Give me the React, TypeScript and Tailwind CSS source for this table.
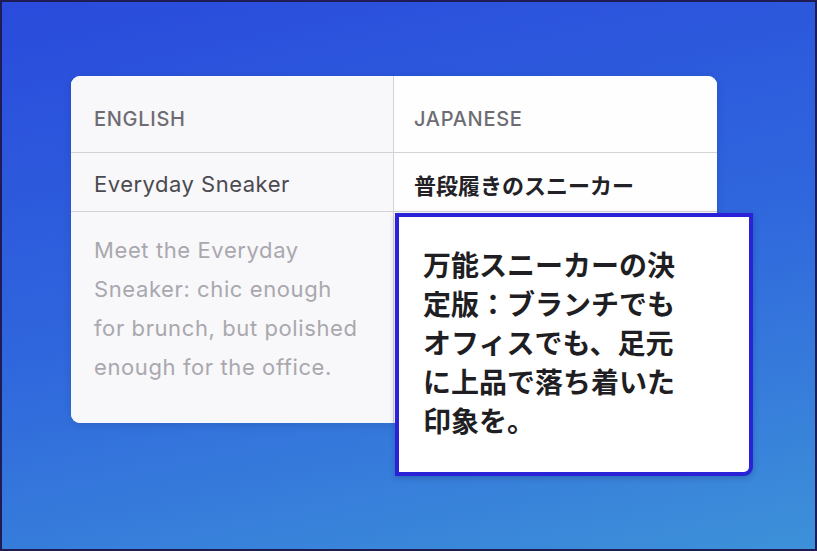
import React from 'react';

const latin = "font-['Inter','Noto_Sans_CJK_JP',sans-serif]";
const jp = "font-['Noto_Sans_CJK_JP','Noto_Sans_CJK_SC',sans-serif]";

const App = () => {
  return (
    <div className="w-[817px] h-[551px] overflow-hidden border-2 border-[#1e1b55] bg-[linear-gradient(168deg,#2a4bdc_0%,#2f66dd_50%,#3d91d9_100%)]">
      <div className="pt-[74px] pl-[69px]">
        {/* Translation table */}
        <div className={`relative w-[646px] rounded-[9px] bg-white shadow-[0_2px_8px_rgba(0,0,40,0.12)] ${latin}`}>
          <div className="grid grid-cols-[323px_323px]">
            {/* header row */}
            <div className="h-[77px] flex items-center pt-[10px] pl-[23px] bg-[#f8f7fa] rounded-tl-[9px] border-r border-b border-[#d3d2d7] text-[20px] font-medium text-[#6d6c72] tracking-[0.7px]">
              ENGLISH
            </div>
            <div className="h-[77px] flex items-center pt-[10px] pl-[20px] bg-[#fefefe] rounded-tr-[9px] border-b border-[#d3d2d7] text-[20px] font-medium text-[#6d6c72] tracking-[0.7px]">
              JAPANESE
            </div>

            {/* title row */}
            <div className="h-[59px] flex items-center pt-[4px] pl-[23px] bg-[#f8f7fa] border-r border-b border-[#d3d2d7] text-[22px] tracking-[0.5px] text-[#4b4a50]">
              Everyday Sneaker
            </div>
            <div className={`h-[59px] flex items-center pt-[4px] pl-[20px] bg-[#fefefe] border-b border-[#d3d2d7] text-[22px] font-bold text-[#222126] ${jp}`}>
              普段履きのスニーカー
            </div>

            {/* description row */}
            <div className="h-[211px] pl-[23px] pt-[19px] bg-[#f8f7fa] rounded-bl-[9px] border-r border-[#d3d2d7]">
              <p className="w-[272px] text-[22px] leading-[39px] tracking-[0.6px] text-[#a9a8ae]">
                Meet the Everyday Sneaker: chic enough for brunch, but polished enough for the office.
              </p>
            </div>
            <div className="h-[211px] bg-[#fefefe] rounded-br-[9px]"></div>
          </div>

          {/* open editor over the Japanese description */}
          <div className="absolute left-[324px] top-[137px] w-[358px] h-[263px] bg-white border-[4px] border-[#2a22d6] rounded-br-[9px] shadow-[0_2px_6px_rgba(0,0,60,0.2)] pl-[24px] pt-[28px]">
            <p className={`w-[262px] text-[28px] leading-[39px] font-bold text-[#1f1e23] ${jp}`}>
              万能スニーカーの決定版：ブランチでもオフィスでも、足元に上品で落ち着いた印象を。
            </p>
          </div>
        </div>
      </div>
    </div>
  );
};

export default App;
